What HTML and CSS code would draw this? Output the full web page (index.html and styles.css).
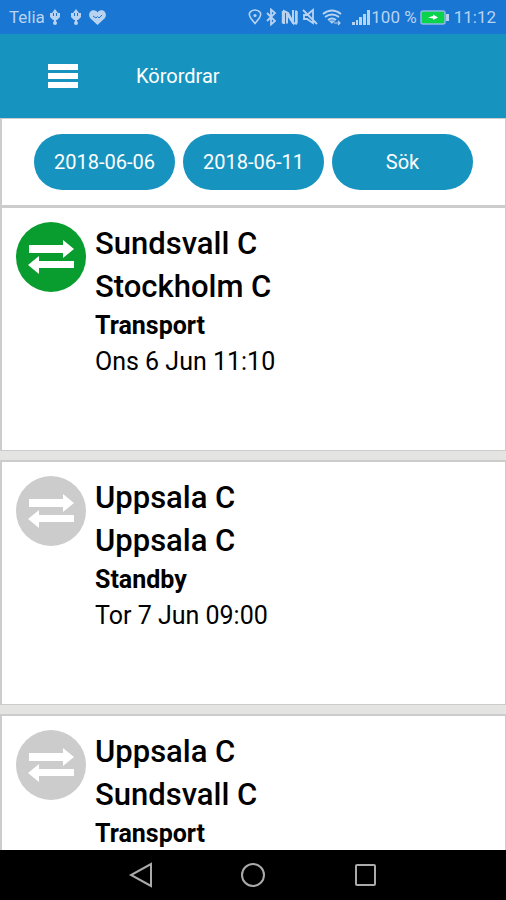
FILE: index.html
```html
<!DOCTYPE html>
<html lang="sv">
<head>
<meta charset="utf-8">
<meta name="viewport" content="width=device-width, initial-scale=1">
<title>Körordrar</title>
<link rel="stylesheet" href="styles.css">
</head>
<body>
<svg class="defs" aria-hidden="true">
  <symbol id="swap" viewBox="0 0 70 70">
    <circle cx="35" cy="35" r="35" fill="currentColor"/>
    <path fill="#fff" d="M13 23H47V18L58 27L47 36V31H13ZM58 39V46H23V52L12 43L23 34V39Z"/>
  </symbol>
  <symbol id="usb" viewBox="0 0 12 16">
    <path d="M6 2V15" fill="none" stroke="currentColor" stroke-width="2"/>
    <path d="M6 0L9 4H3ZM1 4H4V7H8V4H11V8L8 11H4L1 8Z" fill="currentColor"/>
    <circle cx="6" cy="14" r="2" fill="currentColor"/>
  </symbol>
</svg>
<div class="screen">
  <div class="status">
    <div class="status-group">
      <span class="carrier">Telia</span>
      <svg class="usb" aria-hidden="true"><use href="#usb"/></svg>
      <svg class="usb usb-second" aria-hidden="true"><use href="#usb"/></svg>
      <svg class="heart" viewBox="0 0 17 15" aria-hidden="true">
        <path d="M8.500 15L1.500 8.500C-2 4 2-1 6 .5Q8 1 8.500 2.500Q9 1 11 .5C15-1 19 4 15.500 8.500Z" fill="currentColor"/>
        <path d="M4 6L7 8L8.500 6.500L10 8L13 5" fill="none" stroke="#1976d2" stroke-width="1"/>
      </svg>
    </div>
    <div class="status-group">
      <svg class="indicators" viewBox="0 0 94 18" aria-hidden="true" fill="none" stroke="currentColor" stroke-width="1.600">
        <path d="M7 15.500L3 10.500C-1 5 3 2 7 2S15 5 11 10.500Z"/>
        <circle cx="7" cy="7.500" r="1.600" fill="currentColor" stroke="none"/>
        <path d="M19 5L27 13L23 16.500V1.500L27 5L19 13" stroke-width="1.800"/>
        <path d="M36 16V3L40 5L45 14V2" stroke-width="2"/>
        <path d="M39 15.500V6L45 15L48 15.500V2.500" stroke-width="2"/>
        <path d="M34.500 3V15.500M49 3V15.500" stroke-width="1.400"/>
        <path d="M56 7H59L65 2V15L59 11H56ZM55 2L69 16" stroke-width="1.800"/>
        <path d="M75 6Q84-1 93 6M77 9Q84 4 91 9M80 12Q84 9 88 12" stroke-width="2"/>
        <path d="M84 15L82 13H86ZM86 15H92M90 13L92 15L90 17" stroke-width="1.200"/>
      </svg>
      <svg class="signal" viewBox="0 0 18 16" aria-hidden="true" fill="currentColor">
        <path d="M0 13H3V16H0ZM4 11H6V16H4ZM7 8H10V16H7ZM11 5H14V16H11ZM15 1H18V16H15Z"/>
      </svg>
      <span class="percent">100 %</span>
      <svg class="battery" viewBox="0 0 29 15" aria-hidden="true">
        <rect x="1" y="1" width="24" height="13" rx="2" fill="#0bd34b" stroke="#8fb9ea" stroke-width="1.500"/>
        <path d="M26 4H29V11H26Z" fill="#b8d3f2"/>
        <path d="M8 7.500L13 6V4.500L18 7.500L13 10V8.500Z" fill="#fff"/>
      </svg>
      <span class="clock">11:12</span>
    </div>
  </div>
  <header class="appbar">
    <button class="menu" type="button" aria-label="Meny">
      <span class="bar"></span><span class="bar"></span><span class="bar"></span>
    </button>
    <h1 class="title">Körordrar</h1>
  </header>
  <main class="content">
    <div class="filters">
      <button class="pill" type="button">2018-06-06</button>
      <button class="pill" type="button">2018-06-11</button>
      <button class="pill" type="button">Sök</button>
    </div>
    <article class="card">
      <svg class="badge badge-active" aria-hidden="true"><use href="#swap"/></svg>
      <div>
        <h2 class="place">Sundsvall C</h2>
        <h2 class="place">Stockholm C</h2>
        <p class="kind">Transport</p>
        <p class="time">Ons 6 Jun 11:10</p>
      </div>
    </article>
    <article class="card">
      <svg class="badge" aria-hidden="true"><use href="#swap"/></svg>
      <div>
        <h2 class="place">Uppsala C</h2>
        <h2 class="place">Uppsala C</h2>
        <p class="kind">Standby</p>
        <p class="time">Tor 7 Jun 09:00</p>
      </div>
    </article>
    <article class="card">
      <svg class="badge" aria-hidden="true"><use href="#swap"/></svg>
      <div>
        <h2 class="place">Uppsala C</h2>
        <h2 class="place">Sundsvall C</h2>
        <p class="kind">Transport</p>
      </div>
    </article>
  </main>
  <nav class="navbar">
    <button class="nav-button" type="button" aria-label="Tillbaka">
      <svg class="nav-icon" viewBox="0 0 26 26" aria-hidden="true"><path d="M23 2V24L3 13Z"/></svg>
    </button>
    <button class="nav-button" type="button" aria-label="Hem">
      <svg class="nav-icon" viewBox="0 0 26 26" aria-hidden="true"><circle cx="13" cy="13" r="11"/></svg>
    </button>
    <button class="nav-button" type="button" aria-label="Översikt">
      <svg class="nav-icon" viewBox="0 0 26 26" aria-hidden="true"><rect x="4" y="3" width="19" height="20" rx="1"/></svg>
    </button>
  </nav>
</div>
</body>
</html>
```

FILE: styles.css
```css
* {
  box-sizing: border-box;
}

body {
  margin: 0;
  font-family: Roboto, "Liberation Sans", sans-serif;
  color: #000;
}

h1, h2, p {
  margin: 0;
}

button {
  border: 0;
  padding: 0;
  font: inherit;
}

.defs {
  position: absolute;
  width: 0;
  height: 0;
}

.screen {
  display: flex;
  flex-direction: column;
  height: 100vh;
  overflow: hidden;
}

.status {
  display: flex;
  flex: none;
  justify-content: space-between;
  align-items: center;
  height: 34px;
  padding: 0 10px 0 9px;
  background: #1976d2;
  color: #b8d3f2;
  font-size: 17px;
}

.status-group {
  display: flex;
  align-items: center;
}

.usb {
  width: 12px;
  height: 16px;
  margin-left: 4px;
}

.usb-second {
  margin-left: 9px;
}

.heart {
  width: 17px;
  height: 15px;
  margin-left: 7px;
}

.indicators {
  width: 94px;
  height: 18px;
}

.signal {
  width: 18px;
  height: 16px;
  margin: 0 1px 0 10px;
}

.battery {
  width: 29px;
  height: 15px;
  margin: 0 5px 0 3px;
}

.appbar {
  display: flex;
  flex: none;
  align-items: center;
  gap: 58px;
  height: 84px;
  padding: 0 48px;
  background: #1694bf;
  color: #fff;
}

.menu {
  display: flex;
  flex-direction: column;
  gap: 3px;
  width: 30px;
  background: none;
}

.bar {
  height: 6px;
  background: #fff;
}

.title {
  font-size: 20px;
  font-weight: 400;
}

.content {
  flex: 1;
  min-height: 0;
  overflow: hidden;
  background: #e4e4e2;
}

.filters {
  display: flex;
  gap: 8px;
  padding: 15px 32px;
  background: #fff;
  border: solid #ccc;
  border-width: 1px 1px 1px 2px;
}

.pill {
  flex: 1;
  height: 56px;
  border-radius: 28px;
  background: #1694bf;
  color: #fff;
  font-size: 20px;
}

.card {
  display: flex;
  gap: 9px;
  min-height: 245px;
  margin-bottom: 9px;
  padding: 14px;
  background: #fff;
  border: solid #ccc;
  border-width: 2px 1px 1px 2px;
}

.badge {
  flex: none;
  width: 70px;
  height: 70px;
  color: #ccc;
}

.badge-active {
  color: #099c2e;
}

.place {
  font-size: 31px;
  font-weight: 500;
  line-height: 43px;
}

.kind {
  font-size: 25px;
  font-weight: 700;
  line-height: 36px;
}

.time {
  font-size: 25px;
  font-weight: 400;
  line-height: 36px;
}

.navbar {
  display: flex;
  flex: none;
  justify-content: center;
  align-items: center;
  gap: 86px;
  height: 50px;
  background: #000;
}

.nav-button {
  display: flex;
  background: none;
}

.nav-icon {
  width: 26px;
  height: 26px;
  fill: none;
  stroke: #aaa;
  stroke-width: 2;
}
```
